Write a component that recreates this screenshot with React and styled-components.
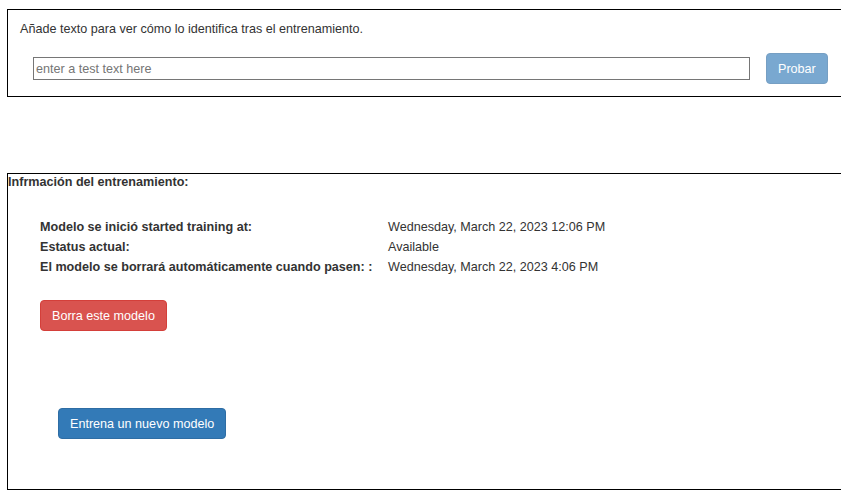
import React from "react";
import styled, { createGlobalStyle } from "styled-components";

const Global = createGlobalStyle`
  html, body { margin: 0; padding: 0; overflow: hidden; background: #fff; }
  body {
    font-family: "Liberation Sans", Arial, Helvetica, sans-serif;
    font-size: 12.6px;
    color: #333;
  }
  * { box-sizing: border-box; }
`;

const Page = styled.div`
  padding: 9px 0 0 7px;
`;

const Panel = styled.section`
  border: 1px solid #000;
  border-right: none;
  margin-top: ${(p) => p.$mt || 0}px;
  height: ${(p) => p.$h}px;
  padding: ${(p) => p.$pad};
`;

const Hint = styled.p`
  margin: 0;
  line-height: 17px;
`;

const TestRow = styled.div`
  display: flex;
  align-items: center;
  margin-top: 15px;
  padding-left: 13px;
`;

const TestInput = styled.input`
  width: 717px;
  height: 23px;
  border: 1px solid #767676;
  border-radius: 0;
  padding: 0 2px;
  font-family: inherit;
  font-size: 12.6px;
  color: #333;
  outline: none;
  &::placeholder { color: #757575; }
`;

const Button = styled.button`
  height: 31px;
  padding: 0 11px;
  border-radius: 4px;
  font-family: inherit;
  font-size: 12.6px;
  color: #fff;
  cursor: pointer;
  white-space: nowrap;
  border: 1px solid ${(p) => (p.$kind === "danger" ? "#d43f3a" : "#2e6da4")};
  background: ${(p) => (p.$kind === "danger" ? "#d9534f" : "#337ab7")};
  opacity: ${(p) => (p.disabled ? 0.65 : 1)};
  margin-left: ${(p) => p.$ml || 0}px;
  margin-top: ${(p) => p.$mt || 0}px;
`;

const Title = styled.h4`
  margin: 0;
  font-size: 12.6px;
  font-weight: bold;
  line-height: 17px;
`;

const InfoTable = styled.div`
  display: grid;
  grid-template-columns: 348px auto;
  margin: 26px 0 0 32px;
  line-height: 20px;
`;

const Label = styled.div`
  font-weight: bold;
`;

const Value = styled.div``;

const Actions = styled.div`
  display: flex;
  flex-direction: column;
  align-items: flex-start;
`;

export default function App() {
  return (
    <>
      <Global />
      <Page>
        <Panel $h={88} $pad="11px 12px 0 12px">
          <Hint>Añade texto para ver cómo lo identifica tras el entrenamiento.</Hint>
          <TestRow>
            <TestInput placeholder="enter a test text here" />
            <Button disabled $ml={16}>Probar</Button>
          </TestRow>
        </Panel>
        <Panel $mt={76} $h={317} $pad="0">
          <Title>Infrmación del entrenamiento:</Title>
          <InfoTable>
            <Label>Modelo se inició started training at:</Label>
            <Value>Wednesday, March 22, 2023 12:06 PM</Value>
            <Label>Estatus actual:</Label>
            <Value>Available</Value>
            <Label>El modelo se borrará automáticamente cuando pasen: :</Label>
            <Value>Wednesday, March 22, 2023 4:06 PM</Value>
          </InfoTable>
          <Actions>
            <Button $kind="danger" $ml={32} $mt={23}>Borra este modelo</Button>
            <Button $ml={50} $mt={77}>Entrena un nuevo modelo</Button>
          </Actions>
        </Panel>
      </Page>
    </>
  );
}
